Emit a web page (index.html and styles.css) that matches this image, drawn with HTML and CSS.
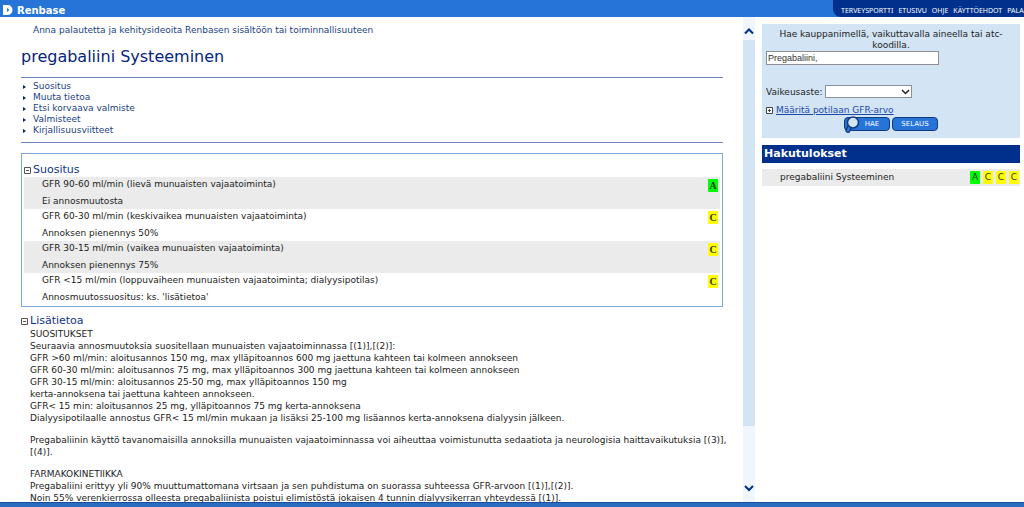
FILE: index.html
```html
<!DOCTYPE html>
<html lang="fi">
<head>
<meta charset="utf-8">
<title>Renbase</title>
<link rel="stylesheet" href="styles.css">
</head>
<body>
<header class="topbar">
  <div class="brand">
    <svg class="logo" width="10" height="10" viewBox="0 0 10 10" aria-hidden="true"><path fill="#fff" fill-rule="evenodd" d="M0 0h5a4.500 5 0 0 1 0 10H0zM4 3v4l2.500-2z"/></svg>
    <span>Renbase</span>
  </div>
  <nav class="topnav">
    <a href="#">TERVEYSPORTTI</a>
    <a href="#">ETUSIVU</a>
    <a href="#">OHJE</a>
    <a href="#">KÄYTTÖEHDOT</a>
    <a href="#">PALAU</a>
  </nav>
</header>
<div class="columns">
  <main class="content">
    <a class="feedback" href="#">Anna palautetta ja kehitysideoita Renbasen sisältöön tai toiminnallisuuteen</a>
    <h1>pregabaliini Systeeminen</h1>
    <ul class="toc">
      <li><a href="#suositus">Suositus</a></li>
      <li><a href="#lisatietoa">Muuta tietoa</a></li>
      <li><a href="#">Etsi korvaava valmiste</a></li>
      <li><a href="#">Valmisteet</a></li>
      <li><a href="#">Kirjallisuusviitteet</a></li>
    </ul>
    <section class="box" id="suositus">
      <h2><svg width="7" height="7" viewBox="0 0 7 7" aria-hidden="true"><path fill="none" stroke="#555" d="M.5.5h6v6h-6zM2 3.500h3"/></svg>Suositus</h2>
      <div class="dose shaded"><div><p>GFR 90-60 ml/min (lievä munuaisten vajaatoiminta)</p><p>Ei annosmuutosta</p></div><span class="grade green">A</span></div>
      <div class="dose"><div><p>GFR 60-30 ml/min (keskivaikea munuaisten vajaatoiminta)</p><p>Annoksen pienennys 50%</p></div><span class="grade">C</span></div>
      <div class="dose shaded"><div><p>GFR 30-15 ml/min (vaikea munuaisten vajaatoiminta)</p><p>Annoksen pienennys 75%</p></div><span class="grade">C</span></div>
      <div class="dose"><div><p>GFR &lt;15 ml/min (loppuvaiheen munuaisten vajaatoiminta; dialyysipotilas)</p><p>Annosmuutossuositus: ks. 'lisätietoa'</p></div><span class="grade">C</span></div>
    </section>
    <section class="info" id="lisatietoa">
      <h2><svg width="7" height="7" viewBox="0 0 7 7" aria-hidden="true"><path fill="none" stroke="#555" d="M.5.5h6v6h-6zM2 3.500h3"/></svg>Lisätietoa</h2>
      <p>SUOSITUKSET<br>
      Seuraavia annosmuutoksia suositellaan munuaisten vajaatoiminnassa [(1)],[(2)]:<br>
      GFR &gt;60 ml/min: aloitusannos 150 mg, max ylläpitoannos 600 mg jaettuna kahteen tai kolmeen annokseen<br>
      GFR 60-30 ml/min: aloitusannos 75 mg, max ylläpitoannos 300 mg jaettuna kahteen tai kolmeen annokseen<br>
      GFR 30-15 ml/min: aloitusannos 25-50 mg, max ylläpitoannos 150 mg<br>
      kerta-annoksena tai jaettuna kahteen annokseen.<br>
      GFR&lt; 15 min: aloitusannos 25 mg, ylläpitoannos 75 mg kerta-annoksena<br>
      Dialyysipotilaalle annostus GFR&lt; 15 ml/min mukaan ja lisäksi 25-100 mg lisäannos kerta-annoksena dialyysin jälkeen.</p>
      <p>Pregabaliinin käyttö tavanomaisilla annoksilla munuaisten vajaatoiminnassa voi aiheuttaa voimistunutta sedaatiota ja neurologisia haittavaikutuksia [(3)],<br>[(4)].</p>
      <p>FARMAKOKINETIIKKA<br>
      Pregabaliini erittyy yli 90% muuttumattomana virtsaan ja sen puhdistuma on suorassa suhteessa GFR-arvoon [(1)],[(2)].<br>
      Noin 55% verenkierrossa olleesta pregabaliinista poistui elimistöstä jokaisen 4 tunnin dialyysikerran yhteydessä [(1)].</p>
    </section>
  </main>
  <div class="scroller">
    <button type="button" aria-label="Vieritä ylös"><svg width="10" height="8" viewBox="0 0 10 8"><path fill="none" stroke="#00308c" stroke-width="2" d="M1 6.500 5 2.500 9 6.500"/></svg></button>
    <div class="track"><div class="thumb"></div></div>
    <button type="button" class="down" aria-label="Vieritä alas"><svg width="10" height="8" viewBox="0 0 10 8"><path fill="none" stroke="#00308c" stroke-width="2" d="M1 2 5 6 9 2"/></svg></button>
  </div>
  <aside class="side">
    <form class="search">
      <label class="hint" for="query">Hae kauppanimellä, vaikuttavalla aineella tai atc-koodilla.</label>
      <input id="query" type="text" value="Pregabaliini,">
      <div class="severity">
        <label for="severity">Vaikeusaste:</label>
        <span class="picker">
          <select id="severity"><option></option></select>
          <svg width="9" height="6" viewBox="0 0 9 6" aria-hidden="true"><path fill="none" stroke="#222" stroke-width="1.500" d="M1 1l3.500 3.500L8 1"/></svg>
        </span>
      </div>
      <div class="gfr">
        <svg width="7" height="7" viewBox="0 0 7 7" aria-hidden="true"><path fill="#fff" stroke="#444" d="M.5.5h6v6h-6zM2 3.500h3M3.500 2v3"/></svg>
        <a href="#">Määritä potilaan GFR-arvo</a>
      </div>
      <div class="actions">
        <button type="button" class="hae"><svg class="lens" width="18" height="20" viewBox="0 0 18 20" aria-hidden="true"><path stroke="#103c7c" stroke-width="5" stroke-linecap="round" d="M5.500 12 4 15.500"/><path stroke="#2a78d8" stroke-width="2.500" stroke-linecap="round" d="M5.500 12 4 15.500"/><circle cx="9" cy="7.500" r="5.500" fill="#d3e4f5" stroke="#103c7c" stroke-width="1.500"/></svg>HAE</button>
        <button type="button">SELAUS</button>
      </div>
    </form>
    <h2 class="results-title">Hakutulokset</h2>
    <div class="result">
      <a href="#">pregabaliini Systeeminen</a>
      <span class="marks"><span class="mark green">A</span><span class="mark">C</span><span class="mark">C</span><span class="mark">C</span></span>
    </div>
  </aside>
</div>
<footer class="bottombar"></footer>
</body>
</html>
```
FILE: styles.css
```css
* { box-sizing: border-box; }

body {
  margin: 0;
  height: 100vh;
  display: flex;
  flex-direction: column;
  overflow: hidden;
  background: #fff;
  color: #1c1c1c;
  font: 9px/12px "DejaVu Sans", sans-serif;
}

h1, h2, p, ul { margin: 0; padding: 0; font-weight: normal; }
a { color: #1b3f87; text-decoration: none; }

.topbar {
  flex: none;
  display: flex;
  justify-content: space-between;
  height: 17px;
  overflow: hidden;
  background: #2674d8;
}
.brand {
  display: flex;
  align-items: center;
  gap: 4px;
  padding: 4px 0 0 3px;
  color: #fff;
  font-weight: bold;
  font-size: 10px;
}
.logo { margin-bottom: 2px; }
.topnav {
  flex: none;
  display: flex;
  gap: 5px;
  width: 191px;
  padding: 5px 0 0 8px;
  background: #00308c;
  border-bottom-left-radius: 8px;
  font: 7px/12px "Noto Sans", sans-serif;
}
.topnav a { flex: none; color: #fff; }

.columns { flex: 1; display: flex; min-height: 0; }
.content {
  flex: 1;
  min-width: 0;
  overflow: hidden;
  padding: 7px 20px 0 21px;
}
.feedback { display: block; padding-left: 12px; }
h1 {
  padding: 11px 0 10px;
  border-bottom: 1px solid #6b86bd;
  color: #06257c;
  font-size: 16px;
  line-height: 20px;
}
.toc {
  list-style: none;
  padding: 3px 0 6px;
  border-bottom: 1px solid #6b86bd;
  line-height: 11px;
}
.toc li { display: flex; align-items: center; gap: 7px; padding-left: 2px; }
.toc li::before {
  content: "";
  border-left: 3px solid #06205c;
  border-top: 2px solid transparent;
  border-bottom: 2px solid transparent;
}
h2 {
  display: flex;
  align-items: center;
  gap: 2px;
  color: #10358c;
  font-size: 11px;
  line-height: 14px;
}
.box {
  margin-top: 10px;
  padding: 9px 2px 1px 2px;
  border: 1px solid #7fa8dc;
}
.dose {
  display: flex;
  justify-content: space-between;
  align-items: flex-start;
  height: 32px;
  padding: 1px 2px 0 18px;
}
.dose p + p { margin-top: 5px; }
.shaded { background: #ebebeb; }
.grade {
  width: 10px;
  margin-top: 1px;
  background: #ff0;
  color: #333;
  text-align: center;
  font: bold 10px/13px "Liberation Serif", serif;
}
.grade.green, .mark.green { background: #0f0; }
.info { padding-top: 7px; }
.info p { padding-left: 9px; margin-bottom: 10px; white-space: nowrap; }

.scroller {
  flex: none;
  width: 12px;
  display: flex;
  flex-direction: column;
  background: #f0f6fd;
}
.scroller button {
  flex: none;
  height: 23px;
  padding: 5px 0 0;
  border: 0;
  background: none;
}
.scroller .down { padding: 0 0 5px; }
.scroller svg { display: block; margin: 0 auto; }
.track { flex: 1; }
.thumb { height: 88%; background: #d3e4f5; }

.side { flex: 0 0 269px; padding: 7px 4px 0 7px; }
.search { padding: 5px 4px 7px; background: #d3e4f5; }
.hint { display: block; padding: 0 10px; line-height: 11px; text-align: center; }
.search input {
  display: block;
  width: 173px;
  height: 14px;
  padding: 0 1px;
  border: 1px solid #8a8f98;
  background: #fff;
  color: #333;
  font: 9px "Liberation Sans", sans-serif;
}
.severity { display: flex; align-items: center; gap: 2px; margin-top: 20px; }
.picker { display: flex; position: relative; }
.picker select {
  width: 87px;
  height: 13px;
  padding: 0;
  border: 1px solid #8a8f98;
  border-radius: 0;
  background: #fff;
  font-size: 9px;
  appearance: none;
}
.picker svg { position: absolute; right: 2px; top: 4px; pointer-events: none; }
.gfr { display: flex; align-items: center; gap: 3px; margin-top: 6px; }
.gfr a { color: #1b49a8; text-decoration: underline; }
.actions { display: flex; gap: 2px; margin-top: 1px; padding-left: 78px; }
.actions button {
  position: relative;
  width: 46px;
  height: 14px;
  padding: 0;
  border: 1px solid #103c7c;
  border-radius: 4px;
  background: #2674d8;
  color: #fff;
  font: 7px "DejaVu Sans", sans-serif;
}
.actions .hae { padding-left: 10px; }
.lens { position: absolute; left: -1px; top: -3px; }
.results-title {
  margin-top: 7px;
  padding: 2px;
  background: #00308c;
  color: #fff;
  font-weight: bold;
}
.result {
  display: flex;
  justify-content: space-between;
  height: 17px;
  margin-top: 6px;
  padding: 2px 1px 0 18px;
  background: #ebebeb;
}
.result a { color: #1c1c1c; }
.marks { display: flex; gap: 3px; }
.mark {
  width: 10px;
  height: 13px;
  background: #ff0;
  color: #333;
  font-size: 9px;
  line-height: 13px;
  text-align: center;
}

.bottombar { flex: none; height: 5px; background: #2a6cc0; border-top: 1px solid #174f9c; }
```
